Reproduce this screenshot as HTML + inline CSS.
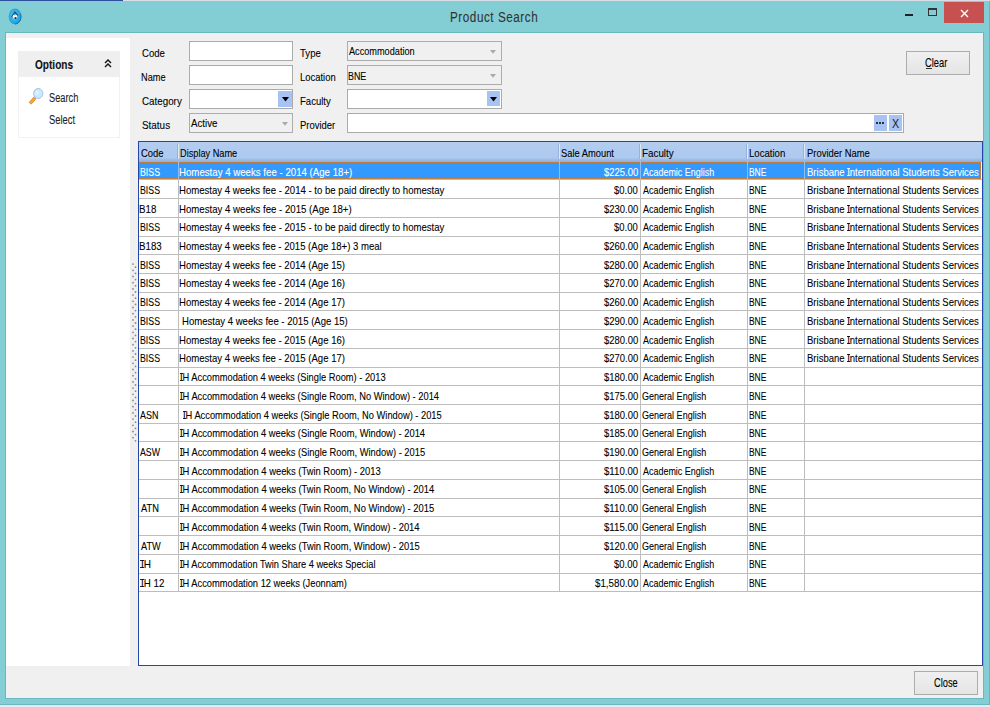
<!DOCTYPE html><html><head><meta charset="utf-8"><style>
*{box-sizing:border-box}
html,body{margin:0;padding:0}
body{width:990px;height:707px;overflow:hidden;position:relative;background:#83CDD5;font-family:"Liberation Sans",sans-serif;color:#000}
div{position:absolute}
.t{white-space:pre;line-height:20px;transform-origin:0 0;-webkit-text-stroke:0.1px currentColor}
.box{background:#fff;border:1px solid #ABABAB}
.cb{background:#F0F0F0;border:1px solid #ADADAD}
.hl{height:1px;background:#BDBDBD}
.vl{width:1px;background:#BDBDBD}
.db{background:#A6C3F4}
</style></head><body>

<div style="left:0;top:0;width:990px;height:1px;background:#D9DEE6"></div>
<div style="left:0;top:0;width:123px;height:1px;background:#2B4F9A"></div>
<div style="left:989px;top:1px;width:1px;height:706px;background:#6AB7BF"></div>
<div style="left:0;top:705px;width:990px;height:2px;background:#E6E8EC"></div>
<div style="left:0;top:704px;width:990px;height:1px;background:#6AB7BF"></div>
<div style="left:5px;top:32px;width:979px;height:667px;border:1px solid #6AB7BF"></div>
<div style="left:6px;top:33px;width:977px;height:665px;background:#F0F0F0"></div>
<svg style="position:absolute;left:8px;top:8px" width="15" height="18" viewBox="0 0 15 18">
<defs><radialGradient id="ig" cx="0.45" cy="0.45" r="0.6"><stop offset="0" stop-color="#5CD0FA"/><stop offset="0.7" stop-color="#22A8EA"/><stop offset="1" stop-color="#1590D0"/></radialGradient></defs>
<ellipse cx="7.0" cy="8.4" rx="6.3" ry="7.9" fill="url(#ig)"/>
<path d="M12.6 5.5 Q14 8.5 12.3 12.5 Q10.5 16 7 16.3" stroke="#1C5A7A" stroke-width="0.9" fill="none" opacity="0.7"/>
<path d="M3.0 8.8 L6.8 3.0 L10.8 7.4 L9.2 7.6 L6.9 5.4 L4.6 9.4 Z" fill="#4A4A4A"/>
<ellipse cx="6.9" cy="8.6" rx="2.3" ry="2.0" fill="#F4F4F4"/>
<circle cx="7.5" cy="10.0" r="1.0" fill="#222"/>
<circle cx="6.8" cy="6.6" r="0.8" fill="#3AB6F0"/>
</svg>
<div class="t" style="left:450.06px;top:7.00px;font-size:15.5px;transform:scaleX(0.7562);color:#333;letter-spacing:0.7px;">Product Search</div>
<div style="left:905.2px;top:14.3px;width:7.8px;height:2.2px;background:#222"></div>
<div style="left:928px;top:8px;width:9px;height:8.4px;border:1px solid #333;border-top-width:2px"></div>
<div style="left:944px;top:2px;width:40px;height:20.7px;background:#C75050"></div>
<svg style="position:absolute;left:960px;top:8.5px" width="9" height="9" viewBox="0 0 9 9"><path d="M1 1 L8 8 M8 1 L1 8" stroke="#fff" stroke-width="1.4"/></svg>
<div style="left:6px;top:38px;width:124px;height:627.6px;background:#fff"></div>
<div style="left:18px;top:51px;width:102px;height:25.7px;background:#EFEFEF"></div>
<div style="left:18px;top:76.7px;width:101.5px;height:61.6px;border:1px solid #F2F2F2;border-top:0"></div>
<div class="t" style="left:35.10px;top:55.00px;font-size:13px;transform:scaleX(0.7755);color:#111;font-weight:bold;">Options</div>
<svg style="position:absolute;left:103.5px;top:59px" width="8" height="9" viewBox="0 0 8 9"><path d="M1 4 L4 1 L7 4 M1 8 L4 5 L7 8" stroke="#111" stroke-width="1.4" fill="none"/></svg>
<svg style="position:absolute;left:28px;top:87px" width="16" height="19" viewBox="0 0 16 19">
<line x1="2.0" y1="16.5" x2="7" y2="10.8" stroke="#D98A20" stroke-width="3.4" stroke-linecap="butt"/>
<line x1="2.0" y1="16.5" x2="7" y2="10.8" stroke="#F5A83A" stroke-width="2.0" stroke-linecap="butt"/>
<ellipse cx="10.2" cy="6.5" rx="4.6" ry="5" fill="#C6EDFA" stroke="#B2B8EA" stroke-width="1"/>
<circle cx="9.2" cy="5.8" r="1.8" fill="#DDF4FC"/>
</svg>
<div class="t" style="left:48.58px;top:88.00px;font-size:12px;transform:scaleX(0.7707);color:#222;">Search</div>
<div class="t" style="left:48.58px;top:110.00px;font-size:12px;transform:scaleX(0.7814);color:#222;">Select</div>
<svg style="position:absolute;left:128px;top:258px" width="12" height="190" viewBox="0 0 12 190"><g fill="#8A8A8A"><circle cx="5.00" cy="6.10" r="0.9"/><circle cx="7.50" cy="9.20" r="0.9"/><circle cx="5.00" cy="12.30" r="0.9"/><circle cx="7.50" cy="15.40" r="0.9"/><circle cx="5.00" cy="18.50" r="0.9"/><circle cx="7.50" cy="21.60" r="0.9"/><circle cx="5.00" cy="24.70" r="0.9"/><circle cx="7.50" cy="27.80" r="0.9"/><circle cx="5.00" cy="30.90" r="0.9"/><circle cx="7.50" cy="34.00" r="0.9"/><circle cx="5.00" cy="37.10" r="0.9"/><circle cx="7.50" cy="40.20" r="0.9"/><circle cx="5.00" cy="43.30" r="0.9"/><circle cx="7.50" cy="46.40" r="0.9"/><circle cx="5.00" cy="49.50" r="0.9"/><circle cx="7.50" cy="52.60" r="0.9"/><circle cx="5.00" cy="55.70" r="0.9"/><circle cx="7.50" cy="58.80" r="0.9"/><circle cx="5.00" cy="61.90" r="0.9"/><circle cx="7.50" cy="65.00" r="0.9"/><circle cx="5.00" cy="68.10" r="0.9"/><circle cx="7.50" cy="71.20" r="0.9"/><circle cx="5.00" cy="74.30" r="0.9"/><circle cx="7.50" cy="77.40" r="0.9"/><circle cx="5.00" cy="80.50" r="0.9"/><circle cx="7.50" cy="83.60" r="0.9"/><circle cx="5.00" cy="86.70" r="0.9"/><circle cx="7.50" cy="89.80" r="0.9"/><circle cx="5.00" cy="92.90" r="0.9"/><circle cx="7.50" cy="96.00" r="0.9"/><circle cx="5.00" cy="99.10" r="0.9"/><circle cx="7.50" cy="102.20" r="0.9"/><circle cx="5.00" cy="105.30" r="0.9"/><circle cx="7.50" cy="108.40" r="0.9"/><circle cx="5.00" cy="111.50" r="0.9"/><circle cx="7.50" cy="114.60" r="0.9"/><circle cx="5.00" cy="117.70" r="0.9"/><circle cx="7.50" cy="120.80" r="0.9"/><circle cx="5.00" cy="123.90" r="0.9"/><circle cx="7.50" cy="127.00" r="0.9"/><circle cx="5.00" cy="130.10" r="0.9"/><circle cx="7.50" cy="133.20" r="0.9"/><circle cx="5.00" cy="136.30" r="0.9"/><circle cx="7.50" cy="139.40" r="0.9"/><circle cx="5.00" cy="142.50" r="0.9"/><circle cx="7.50" cy="145.60" r="0.9"/><circle cx="5.00" cy="148.70" r="0.9"/><circle cx="7.50" cy="151.80" r="0.9"/><circle cx="5.00" cy="154.90" r="0.9"/><circle cx="7.50" cy="158.00" r="0.9"/><circle cx="5.00" cy="161.10" r="0.9"/><circle cx="7.50" cy="164.20" r="0.9"/><circle cx="5.00" cy="167.30" r="0.9"/><circle cx="7.50" cy="170.40" r="0.9"/><circle cx="5.00" cy="173.50" r="0.9"/><circle cx="7.50" cy="176.60" r="0.9"/><circle cx="5.00" cy="179.70" r="0.9"/><circle cx="7.50" cy="182.80" r="0.9"/></g></svg>
<div class="t" style="left:141.52px;top:43.00px;font-size:11.8px;transform:scaleX(0.8115);color:#000;">Code</div>
<div class="t" style="left:141.26px;top:67.00px;font-size:11.8px;transform:scaleX(0.7792);color:#000;">Name</div>
<div class="t" style="left:141.51px;top:91.00px;font-size:11.8px;transform:scaleX(0.8311);color:#000;">Category</div>
<div class="t" style="left:141.55px;top:115.00px;font-size:11.8px;transform:scaleX(0.8398);color:#000;">Status</div>
<div class="t" style="left:300.41px;top:43.00px;font-size:11.8px;transform:scaleX(0.8132);color:#000;">Type</div>
<div class="t" style="left:299.85px;top:67.00px;font-size:11.8px;transform:scaleX(0.7991);color:#000;">Location</div>
<div class="t" style="left:299.84px;top:91.00px;font-size:11.8px;transform:scaleX(0.8090);color:#000;">Faculty</div>
<div class="t" style="left:299.84px;top:115.00px;font-size:11.8px;transform:scaleX(0.8013);color:#000;">Provider</div>
<div class="box" style="left:189px;top:41px;width:104.3px;height:20px"></div>
<div class="box" style="left:189px;top:65px;width:104.3px;height:20px"></div>
<div class="box" style="left:189px;top:89px;width:104.3px;height:20px"></div>
<div class="db" style="left:278.4px;top:90.9px;width:13.2px;height:15.8px"></div>
<svg style="position:absolute;left:281.8px;top:97.2px" width="8" height="5" viewBox="0 0 8 5"><path d="M0 0 L7 0 L3.5 4.5 Z" fill="#000"/></svg>
<div class="cb" style="left:189px;top:113px;width:104.3px;height:20px"></div>
<div class="t" style="left:190.60px;top:113.00px;font-size:11.8px;transform:scaleX(0.8253);color:#000;">Active</div>
<svg style="position:absolute;left:282.3px;top:121.6px" width="7" height="4" viewBox="0 0 7 4"><path d="M0 0 L6 0 L3 3.8 Z" fill="#A8A8A8"/></svg>
<div class="cb" style="left:347.3px;top:41px;width:154.5px;height:20px"></div>
<div class="t" style="left:348.80px;top:41.00px;font-size:11.8px;transform:scaleX(0.7762);color:#000;">Accommodation</div>
<svg style="position:absolute;left:490px;top:49.6px" width="7" height="4" viewBox="0 0 7 4"><path d="M0 0 L6 0 L3 3.8 Z" fill="#A8A8A8"/></svg>
<div class="cb" style="left:347.3px;top:65px;width:154.5px;height:20px"></div>
<div class="t" style="left:348.09px;top:66.00px;font-size:11.8px;transform:scaleX(0.7533);color:#000;">BNE</div>
<svg style="position:absolute;left:490px;top:73.6px" width="7" height="4" viewBox="0 0 7 4"><path d="M0 0 L6 0 L3 3.8 Z" fill="#A8A8A8"/></svg>
<div class="box" style="left:347.3px;top:89px;width:154.5px;height:20px"></div>
<div class="db" style="left:486.6px;top:90.6px;width:13.3px;height:15.8px"></div>
<svg style="position:absolute;left:489.9px;top:97.2px" width="8" height="5" viewBox="0 0 8 5"><path d="M0 0 L7 0 L3.5 4.5 Z" fill="#000"/></svg>
<div class="box" style="left:347.3px;top:113px;width:556.5px;height:20px"></div>
<div class="db" style="left:874px;top:115px;width:13px;height:15.8px"></div>
<div class="db" style="left:888.9px;top:115px;width:13.1px;height:15.8px"></div>
<div style="left:876.3px;top:121.5px;width:2px;height:2px;background:#000;border-radius:1px"></div>
<div style="left:879.3px;top:121.5px;width:2px;height:2px;background:#000;border-radius:1px"></div>
<div style="left:882.3px;top:121.5px;width:2px;height:2px;background:#000;border-radius:1px"></div>
<div class="t" style="left:891.56px;top:114.00px;font-size:12px;transform:scaleX(0.8933);color:#222;-webkit-text-stroke-width:0px;">X</div>
<div style="left:905.6px;top:51px;width:64.2px;height:23.6px;border:1px solid #ACACAC;background:linear-gradient(#F0F0F0,#E5E5E5)"></div>
<div class="t" style="left:924.83px;top:53.00px;font-size:12.6px;transform:scaleX(0.7442);color:#000;">Clear</div>
<div style="left:925.9px;top:67.5px;width:6px;height:1px;background:#333"></div>
<div style="left:914.2px;top:671.2px;width:64px;height:23.8px;border:1px solid #ACACAC;background:linear-gradient(#F0F0F0,#E5E5E5)"></div>
<div class="t" style="left:933.64px;top:673.00px;font-size:12.6px;transform:scaleX(0.7348);color:#000;">Close</div>
<div style="left:138px;top:141px;width:845px;height:525.4px;background:#fff;border:1px solid #2346A8"></div>
<div style="left:139px;top:142px;width:843px;height:19.68px;background:linear-gradient(#B3CDF0 0,#ADC9EE 78%,#8FAEE0 100%)"></div>
<div style="left:176.8px;top:144px;width:1px;height:15px;background:#98B2DE"></div>
<div style="left:177.8px;top:144px;width:1px;height:15px;background:#DCE7F8"></div>
<div style="left:558.0px;top:144px;width:1px;height:15px;background:#98B2DE"></div>
<div style="left:559.0px;top:144px;width:1px;height:15px;background:#DCE7F8"></div>
<div style="left:639.1px;top:144px;width:1px;height:15px;background:#98B2DE"></div>
<div style="left:640.1px;top:144px;width:1px;height:15px;background:#DCE7F8"></div>
<div style="left:746.3px;top:144px;width:1px;height:15px;background:#98B2DE"></div>
<div style="left:747.3px;top:144px;width:1px;height:15px;background:#DCE7F8"></div>
<div style="left:803.2px;top:144px;width:1px;height:15px;background:#98B2DE"></div>
<div style="left:804.2px;top:144px;width:1px;height:15px;background:#DCE7F8"></div>
<div class="t" style="left:140.53px;top:143.00px;font-size:11.8px;transform:scaleX(0.8004);color:#000;">Code</div>
<div class="t" style="left:179.66px;top:143.00px;font-size:11.8px;transform:scaleX(0.7794);color:#000;">Display Name</div>
<div class="t" style="left:561.38px;top:143.00px;font-size:11.8px;transform:scaleX(0.7917);color:#000;">Sale Amount</div>
<div class="t" style="left:642.41px;top:143.00px;font-size:11.8px;transform:scaleX(0.8333);color:#000;">Faculty</div>
<div class="t" style="left:749.23px;top:143.00px;font-size:11.8px;transform:scaleX(0.8131);color:#000;">Location</div>
<div class="t" style="left:806.55px;top:143.00px;font-size:11.8px;transform:scaleX(0.7989);color:#000;">Provider Name</div>
<div style="left:139px;top:161.68px;width:842px;height:17.72px;background:#3399FF"></div>
<div style="left:139px;top:161.68px;width:842px;height:17.72px;border:1px dotted #C08040"></div>
<div class="hl" style="left:139px;top:179.40px;width:843px"></div>
<div class="hl" style="left:139px;top:198.12px;width:843px"></div>
<div class="hl" style="left:139px;top:216.84px;width:843px"></div>
<div class="hl" style="left:139px;top:235.56px;width:843px"></div>
<div class="hl" style="left:139px;top:254.28px;width:843px"></div>
<div class="hl" style="left:139px;top:273.00px;width:843px"></div>
<div class="hl" style="left:139px;top:291.72px;width:843px"></div>
<div class="hl" style="left:139px;top:310.44px;width:843px"></div>
<div class="hl" style="left:139px;top:329.16px;width:843px"></div>
<div class="hl" style="left:139px;top:347.88px;width:843px"></div>
<div class="hl" style="left:139px;top:366.60px;width:843px"></div>
<div class="hl" style="left:139px;top:385.32px;width:843px"></div>
<div class="hl" style="left:139px;top:404.04px;width:843px"></div>
<div class="hl" style="left:139px;top:422.76px;width:843px"></div>
<div class="hl" style="left:139px;top:441.48px;width:843px"></div>
<div class="hl" style="left:139px;top:460.20px;width:843px"></div>
<div class="hl" style="left:139px;top:478.92px;width:843px"></div>
<div class="hl" style="left:139px;top:497.64px;width:843px"></div>
<div class="hl" style="left:139px;top:516.36px;width:843px"></div>
<div class="hl" style="left:139px;top:535.08px;width:843px"></div>
<div class="hl" style="left:139px;top:553.80px;width:843px"></div>
<div class="hl" style="left:139px;top:572.52px;width:843px"></div>
<div class="hl" style="left:139px;top:591.24px;width:843px"></div>
<div class="vl" style="left:177.7px;top:160.68px;height:430.56px"></div>
<div style="left:177.7px;top:162.68px;width:1px;height:15.72px;background:#8CC0F4"></div>
<div class="vl" style="left:558.9px;top:160.68px;height:430.56px"></div>
<div style="left:558.9px;top:162.68px;width:1px;height:15.72px;background:#8CC0F4"></div>
<div class="vl" style="left:640.0px;top:160.68px;height:430.56px"></div>
<div style="left:640.0px;top:162.68px;width:1px;height:15.72px;background:#8CC0F4"></div>
<div class="vl" style="left:747.2px;top:160.68px;height:430.56px"></div>
<div style="left:747.2px;top:162.68px;width:1px;height:15.72px;background:#8CC0F4"></div>
<div class="vl" style="left:804.1px;top:160.68px;height:430.56px"></div>
<div style="left:804.1px;top:162.68px;width:1px;height:15.72px;background:#8CC0F4"></div>
<div class="t" style="left:139.60px;top:162.00px;font-size:11.8px;transform:scaleX(0.7432);color:#fff;">BISS</div>
<div class="t" style="left:179.13px;top:162.00px;font-size:11.8px;transform:scaleX(0.8195);color:#fff;">Homestay 4 weeks fee - 2014 (Age 18+)</div>

<div class="t" style="left:603.71px;top:162.00px;font-size:11.8px;transform:scaleX(0.8011);color:#fff;">$225.00</div>
<div class="t" style="left:642.70px;top:162.00px;font-size:11.8px;transform:scaleX(0.7588);color:#fff;">Academic English</div>
<div class="t" style="left:749.03px;top:162.00px;font-size:11.8px;transform:scaleX(0.7139);color:#fff;">BNE</div>
<div class="t" style="left:806.64px;top:162.00px;font-size:11.8px;transform:scaleX(0.8063);color:#fff;">Brisbane International Students Services</div>
<div style="left:846.56px;top:168px;width:3.2px;height:1px;background:#fff;opacity:.85"></div><div style="left:846.56px;top:175px;width:3.2px;height:1px;background:#fff;opacity:.85"></div>
<div class="t" style="left:139.60px;top:180.00px;font-size:11.8px;transform:scaleX(0.7432);color:#000;">BISS</div>
<div class="t" style="left:179.13px;top:180.00px;font-size:11.8px;transform:scaleX(0.8127);color:#000;">Homestay 4 weeks fee - 2014 - to be paid directly to homestay</div>

<div class="t" style="left:614.21px;top:180.00px;font-size:11.8px;transform:scaleX(0.8009);color:#000;">$0.00</div>
<div class="t" style="left:642.70px;top:180.00px;font-size:11.8px;transform:scaleX(0.7588);color:#000;">Academic English</div>
<div class="t" style="left:749.03px;top:180.00px;font-size:11.8px;transform:scaleX(0.7139);color:#000;">BNE</div>
<div class="t" style="left:806.64px;top:180.00px;font-size:11.8px;transform:scaleX(0.8063);color:#000;">Brisbane International Students Services</div>
<div style="left:846.56px;top:186px;width:3.2px;height:1px;background:#000;opacity:.85"></div><div style="left:846.56px;top:193px;width:3.2px;height:1px;background:#000;opacity:.85"></div>
<div class="t" style="left:139.32px;top:199.00px;font-size:11.8px;transform:scaleX(0.8232);color:#000;">B18</div>
<div class="t" style="left:179.13px;top:199.00px;font-size:11.8px;transform:scaleX(0.8166);color:#000;">Homestay 4 weeks fee - 2015 (Age 18+)</div>

<div class="t" style="left:603.71px;top:199.00px;font-size:11.8px;transform:scaleX(0.8011);color:#000;">$230.00</div>
<div class="t" style="left:642.70px;top:199.00px;font-size:11.8px;transform:scaleX(0.7588);color:#000;">Academic English</div>
<div class="t" style="left:749.03px;top:199.00px;font-size:11.8px;transform:scaleX(0.7139);color:#000;">BNE</div>
<div class="t" style="left:806.64px;top:199.00px;font-size:11.8px;transform:scaleX(0.8063);color:#000;">Brisbane International Students Services</div>
<div style="left:846.56px;top:205px;width:3.2px;height:1px;background:#000;opacity:.85"></div><div style="left:846.56px;top:212px;width:3.2px;height:1px;background:#000;opacity:.85"></div>
<div class="t" style="left:139.60px;top:217.00px;font-size:11.8px;transform:scaleX(0.7432);color:#000;">BISS</div>
<div class="t" style="left:179.13px;top:217.00px;font-size:11.8px;transform:scaleX(0.8127);color:#000;">Homestay 4 weeks fee - 2015 - to be paid directly to homestay</div>

<div class="t" style="left:614.21px;top:217.00px;font-size:11.8px;transform:scaleX(0.8009);color:#000;">$0.00</div>
<div class="t" style="left:642.70px;top:217.00px;font-size:11.8px;transform:scaleX(0.7588);color:#000;">Academic English</div>
<div class="t" style="left:749.03px;top:217.00px;font-size:11.8px;transform:scaleX(0.7139);color:#000;">BNE</div>
<div class="t" style="left:806.64px;top:217.00px;font-size:11.8px;transform:scaleX(0.8063);color:#000;">Brisbane International Students Services</div>
<div style="left:846.56px;top:223px;width:3.2px;height:1px;background:#000;opacity:.85"></div><div style="left:846.56px;top:230px;width:3.2px;height:1px;background:#000;opacity:.85"></div>
<div class="t" style="left:139.22px;top:236.00px;font-size:11.8px;transform:scaleX(0.8235);color:#000;">B183</div>
<div class="t" style="left:179.14px;top:236.00px;font-size:11.8px;transform:scaleX(0.8103);color:#000;">Homestay 4 weeks fee - 2015 (Age 18+) 3 meal</div>

<div class="t" style="left:603.71px;top:236.00px;font-size:11.8px;transform:scaleX(0.8011);color:#000;">$260.00</div>
<div class="t" style="left:642.70px;top:236.00px;font-size:11.8px;transform:scaleX(0.7588);color:#000;">Academic English</div>
<div class="t" style="left:749.03px;top:236.00px;font-size:11.8px;transform:scaleX(0.7139);color:#000;">BNE</div>
<div class="t" style="left:806.64px;top:236.00px;font-size:11.8px;transform:scaleX(0.8063);color:#000;">Brisbane International Students Services</div>
<div style="left:846.56px;top:242px;width:3.2px;height:1px;background:#000;opacity:.85"></div><div style="left:846.56px;top:249px;width:3.2px;height:1px;background:#000;opacity:.85"></div>
<div class="t" style="left:139.60px;top:255.00px;font-size:11.8px;transform:scaleX(0.7432);color:#000;">BISS</div>
<div class="t" style="left:179.13px;top:255.00px;font-size:11.8px;transform:scaleX(0.8114);color:#000;">Homestay 4 weeks fee - 2014 (Age 15)</div>

<div class="t" style="left:603.71px;top:255.00px;font-size:11.8px;transform:scaleX(0.8011);color:#000;">$280.00</div>
<div class="t" style="left:642.70px;top:255.00px;font-size:11.8px;transform:scaleX(0.7588);color:#000;">Academic English</div>
<div class="t" style="left:749.03px;top:255.00px;font-size:11.8px;transform:scaleX(0.7139);color:#000;">BNE</div>
<div class="t" style="left:806.64px;top:255.00px;font-size:11.8px;transform:scaleX(0.8063);color:#000;">Brisbane International Students Services</div>
<div style="left:846.56px;top:261px;width:3.2px;height:1px;background:#000;opacity:.85"></div><div style="left:846.56px;top:268px;width:3.2px;height:1px;background:#000;opacity:.85"></div>
<div class="t" style="left:139.60px;top:273.00px;font-size:11.8px;transform:scaleX(0.7432);color:#000;">BISS</div>
<div class="t" style="left:179.13px;top:273.00px;font-size:11.8px;transform:scaleX(0.8114);color:#000;">Homestay 4 weeks fee - 2014 (Age 16)</div>

<div class="t" style="left:603.71px;top:273.00px;font-size:11.8px;transform:scaleX(0.8011);color:#000;">$270.00</div>
<div class="t" style="left:642.70px;top:273.00px;font-size:11.8px;transform:scaleX(0.7588);color:#000;">Academic English</div>
<div class="t" style="left:749.03px;top:273.00px;font-size:11.8px;transform:scaleX(0.7139);color:#000;">BNE</div>
<div class="t" style="left:806.64px;top:273.00px;font-size:11.8px;transform:scaleX(0.8063);color:#000;">Brisbane International Students Services</div>
<div style="left:846.56px;top:279px;width:3.2px;height:1px;background:#000;opacity:.85"></div><div style="left:846.56px;top:286px;width:3.2px;height:1px;background:#000;opacity:.85"></div>
<div class="t" style="left:139.60px;top:292.00px;font-size:11.8px;transform:scaleX(0.7432);color:#000;">BISS</div>
<div class="t" style="left:179.13px;top:292.00px;font-size:11.8px;transform:scaleX(0.8114);color:#000;">Homestay 4 weeks fee - 2014 (Age 17)</div>

<div class="t" style="left:603.71px;top:292.00px;font-size:11.8px;transform:scaleX(0.8011);color:#000;">$260.00</div>
<div class="t" style="left:642.70px;top:292.00px;font-size:11.8px;transform:scaleX(0.7588);color:#000;">Academic English</div>
<div class="t" style="left:749.03px;top:292.00px;font-size:11.8px;transform:scaleX(0.7139);color:#000;">BNE</div>
<div class="t" style="left:806.64px;top:292.00px;font-size:11.8px;transform:scaleX(0.8063);color:#000;">Brisbane International Students Services</div>
<div style="left:846.56px;top:298px;width:3.2px;height:1px;background:#000;opacity:.85"></div><div style="left:846.56px;top:305px;width:3.2px;height:1px;background:#000;opacity:.85"></div>
<div class="t" style="left:139.60px;top:311.00px;font-size:11.8px;transform:scaleX(0.7432);color:#000;">BISS</div>
<div class="t" style="left:181.83px;top:311.00px;font-size:11.8px;transform:scaleX(0.8104);color:#000;">Homestay 4 weeks fee - 2015 (Age 15)</div>

<div class="t" style="left:603.71px;top:311.00px;font-size:11.8px;transform:scaleX(0.8011);color:#000;">$290.00</div>
<div class="t" style="left:642.70px;top:311.00px;font-size:11.8px;transform:scaleX(0.7588);color:#000;">Academic English</div>
<div class="t" style="left:749.03px;top:311.00px;font-size:11.8px;transform:scaleX(0.7139);color:#000;">BNE</div>
<div class="t" style="left:806.64px;top:311.00px;font-size:11.8px;transform:scaleX(0.8063);color:#000;">Brisbane International Students Services</div>
<div style="left:846.56px;top:317px;width:3.2px;height:1px;background:#000;opacity:.85"></div><div style="left:846.56px;top:324px;width:3.2px;height:1px;background:#000;opacity:.85"></div>
<div class="t" style="left:139.60px;top:330.00px;font-size:11.8px;transform:scaleX(0.7432);color:#000;">BISS</div>
<div class="t" style="left:179.13px;top:330.00px;font-size:11.8px;transform:scaleX(0.8114);color:#000;">Homestay 4 weeks fee - 2015 (Age 16)</div>

<div class="t" style="left:603.71px;top:330.00px;font-size:11.8px;transform:scaleX(0.8011);color:#000;">$280.00</div>
<div class="t" style="left:642.70px;top:330.00px;font-size:11.8px;transform:scaleX(0.7588);color:#000;">Academic English</div>
<div class="t" style="left:749.03px;top:330.00px;font-size:11.8px;transform:scaleX(0.7139);color:#000;">BNE</div>
<div class="t" style="left:806.64px;top:330.00px;font-size:11.8px;transform:scaleX(0.8063);color:#000;">Brisbane International Students Services</div>
<div style="left:846.56px;top:336px;width:3.2px;height:1px;background:#000;opacity:.85"></div><div style="left:846.56px;top:343px;width:3.2px;height:1px;background:#000;opacity:.85"></div>
<div class="t" style="left:139.60px;top:348.00px;font-size:11.8px;transform:scaleX(0.7432);color:#000;">BISS</div>
<div class="t" style="left:179.13px;top:348.00px;font-size:11.8px;transform:scaleX(0.8114);color:#000;">Homestay 4 weeks fee - 2015 (Age 17)</div>

<div class="t" style="left:603.71px;top:348.00px;font-size:11.8px;transform:scaleX(0.8011);color:#000;">$270.00</div>
<div class="t" style="left:642.70px;top:348.00px;font-size:11.8px;transform:scaleX(0.7588);color:#000;">Academic English</div>
<div class="t" style="left:749.03px;top:348.00px;font-size:11.8px;transform:scaleX(0.7139);color:#000;">BNE</div>
<div class="t" style="left:806.64px;top:348.00px;font-size:11.8px;transform:scaleX(0.8063);color:#000;">Brisbane International Students Services</div>
<div style="left:846.56px;top:354px;width:3.2px;height:1px;background:#000;opacity:.85"></div><div style="left:846.56px;top:361px;width:3.2px;height:1px;background:#000;opacity:.85"></div>
<div class="t" style="left:180.26px;top:367.00px;font-size:11.8px;transform:scaleX(0.7878);color:#000;">IH Accommodation 4 weeks (Single Room) - 2013</div>
<div style="left:179.96px;top:373px;width:3.2px;height:1px;background:#000;opacity:.85"></div><div style="left:179.96px;top:380px;width:3.2px;height:1px;background:#000;opacity:.85"></div>
<div class="t" style="left:603.71px;top:367.00px;font-size:11.8px;transform:scaleX(0.8011);color:#000;">$180.00</div>
<div class="t" style="left:642.70px;top:367.00px;font-size:11.8px;transform:scaleX(0.7588);color:#000;">Academic English</div>
<div class="t" style="left:749.03px;top:367.00px;font-size:11.8px;transform:scaleX(0.7139);color:#000;">BNE</div>
<div class="t" style="left:180.26px;top:386.00px;font-size:11.8px;transform:scaleX(0.7901);color:#000;">IH Accommodation 4 weeks (Single Room, No Window) - 2014</div>
<div style="left:179.96px;top:392px;width:3.2px;height:1px;background:#000;opacity:.85"></div><div style="left:179.96px;top:399px;width:3.2px;height:1px;background:#000;opacity:.85"></div>
<div class="t" style="left:603.71px;top:386.00px;font-size:11.8px;transform:scaleX(0.8011);color:#000;">$175.00</div>
<div class="t" style="left:642.25px;top:386.00px;font-size:11.8px;transform:scaleX(0.7649);color:#000;">General English</div>
<div class="t" style="left:749.03px;top:386.00px;font-size:11.8px;transform:scaleX(0.7139);color:#000;">BNE</div>
<div class="t" style="left:140.20px;top:405.00px;font-size:11.8px;transform:scaleX(0.7585);color:#000;">ASN</div>
<div class="t" style="left:182.96px;top:405.00px;font-size:11.8px;transform:scaleX(0.7892);color:#000;">IH Accommodation 4 weeks (Single Room, No Window) - 2015</div>
<div style="left:182.66px;top:411px;width:3.2px;height:1px;background:#000;opacity:.85"></div><div style="left:182.66px;top:418px;width:3.2px;height:1px;background:#000;opacity:.85"></div>
<div class="t" style="left:603.71px;top:405.00px;font-size:11.8px;transform:scaleX(0.8011);color:#000;">$180.00</div>
<div class="t" style="left:642.25px;top:405.00px;font-size:11.8px;transform:scaleX(0.7649);color:#000;">General English</div>
<div class="t" style="left:749.03px;top:405.00px;font-size:11.8px;transform:scaleX(0.7139);color:#000;">BNE</div>
<div class="t" style="left:180.26px;top:423.00px;font-size:11.8px;transform:scaleX(0.7918);color:#000;">IH Accommodation 4 weeks (Single Room, Window) - 2014</div>
<div style="left:179.96px;top:429px;width:3.2px;height:1px;background:#000;opacity:.85"></div><div style="left:179.96px;top:436px;width:3.2px;height:1px;background:#000;opacity:.85"></div>
<div class="t" style="left:603.71px;top:423.00px;font-size:11.8px;transform:scaleX(0.8011);color:#000;">$185.00</div>
<div class="t" style="left:642.25px;top:423.00px;font-size:11.8px;transform:scaleX(0.7649);color:#000;">General English</div>
<div class="t" style="left:749.03px;top:423.00px;font-size:11.8px;transform:scaleX(0.7139);color:#000;">BNE</div>
<div class="t" style="left:140.20px;top:442.00px;font-size:11.8px;transform:scaleX(0.7442);color:#000;">ASW</div>
<div class="t" style="left:180.26px;top:442.00px;font-size:11.8px;transform:scaleX(0.7922);color:#000;">IH Accommodation 4 weeks (Single Room, Window) - 2015</div>
<div style="left:179.96px;top:448px;width:3.2px;height:1px;background:#000;opacity:.85"></div><div style="left:179.96px;top:455px;width:3.2px;height:1px;background:#000;opacity:.85"></div>
<div class="t" style="left:603.71px;top:442.00px;font-size:11.8px;transform:scaleX(0.8011);color:#000;">$190.00</div>
<div class="t" style="left:642.25px;top:442.00px;font-size:11.8px;transform:scaleX(0.7649);color:#000;">General English</div>
<div class="t" style="left:749.03px;top:442.00px;font-size:11.8px;transform:scaleX(0.7139);color:#000;">BNE</div>
<div class="t" style="left:180.26px;top:461.00px;font-size:11.8px;transform:scaleX(0.7951);color:#000;">IH Accommodation 4 weeks (Twin Room) - 2013</div>
<div style="left:179.96px;top:467px;width:3.2px;height:1px;background:#000;opacity:.85"></div><div style="left:179.96px;top:474px;width:3.2px;height:1px;background:#000;opacity:.85"></div>
<div class="t" style="left:603.70px;top:461.00px;font-size:11.8px;transform:scaleX(0.8177);color:#000;">$110.00</div>
<div class="t" style="left:642.70px;top:461.00px;font-size:11.8px;transform:scaleX(0.7588);color:#000;">Academic English</div>
<div class="t" style="left:749.03px;top:461.00px;font-size:11.8px;transform:scaleX(0.7139);color:#000;">BNE</div>
<div class="t" style="left:180.25px;top:479.00px;font-size:11.8px;transform:scaleX(0.7960);color:#000;">IH Accommodation 4 weeks (Twin Room, No Window) - 2014</div>
<div style="left:179.96px;top:485px;width:3.2px;height:1px;background:#000;opacity:.85"></div><div style="left:179.96px;top:492px;width:3.2px;height:1px;background:#000;opacity:.85"></div>
<div class="t" style="left:603.71px;top:479.00px;font-size:11.8px;transform:scaleX(0.8011);color:#000;">$105.00</div>
<div class="t" style="left:642.25px;top:479.00px;font-size:11.8px;transform:scaleX(0.7649);color:#000;">General English</div>
<div class="t" style="left:749.03px;top:479.00px;font-size:11.8px;transform:scaleX(0.7139);color:#000;">BNE</div>
<div class="t" style="left:140.50px;top:498.00px;font-size:11.8px;transform:scaleX(0.7900);color:#000;">ATN</div>
<div class="t" style="left:180.25px;top:498.00px;font-size:11.8px;transform:scaleX(0.7963);color:#000;">IH Accommodation 4 weeks (Twin Room, No Window) - 2015</div>
<div style="left:179.96px;top:504px;width:3.2px;height:1px;background:#000;opacity:.85"></div><div style="left:179.96px;top:511px;width:3.2px;height:1px;background:#000;opacity:.85"></div>
<div class="t" style="left:603.70px;top:498.00px;font-size:11.8px;transform:scaleX(0.8177);color:#000;">$110.00</div>
<div class="t" style="left:642.25px;top:498.00px;font-size:11.8px;transform:scaleX(0.7649);color:#000;">General English</div>
<div class="t" style="left:749.03px;top:498.00px;font-size:11.8px;transform:scaleX(0.7139);color:#000;">BNE</div>
<div class="t" style="left:180.25px;top:517.00px;font-size:11.8px;transform:scaleX(0.7960);color:#000;">IH Accommodation 4 weeks (Twin Room, Window) - 2014</div>
<div style="left:179.96px;top:523px;width:3.2px;height:1px;background:#000;opacity:.85"></div><div style="left:179.96px;top:530px;width:3.2px;height:1px;background:#000;opacity:.85"></div>
<div class="t" style="left:603.70px;top:517.00px;font-size:11.8px;transform:scaleX(0.8177);color:#000;">$115.00</div>
<div class="t" style="left:642.25px;top:517.00px;font-size:11.8px;transform:scaleX(0.7649);color:#000;">General English</div>
<div class="t" style="left:749.03px;top:517.00px;font-size:11.8px;transform:scaleX(0.7139);color:#000;">BNE</div>
<div class="t" style="left:140.50px;top:536.00px;font-size:11.8px;transform:scaleX(0.7783);color:#000;">ATW</div>
<div class="t" style="left:180.25px;top:536.00px;font-size:11.8px;transform:scaleX(0.7964);color:#000;">IH Accommodation 4 weeks (Twin Room, Window) - 2015</div>
<div style="left:179.96px;top:542px;width:3.2px;height:1px;background:#000;opacity:.85"></div><div style="left:179.96px;top:549px;width:3.2px;height:1px;background:#000;opacity:.85"></div>
<div class="t" style="left:603.71px;top:536.00px;font-size:11.8px;transform:scaleX(0.8011);color:#000;">$120.00</div>
<div class="t" style="left:642.25px;top:536.00px;font-size:11.8px;transform:scaleX(0.7649);color:#000;">General English</div>
<div class="t" style="left:749.03px;top:536.00px;font-size:11.8px;transform:scaleX(0.7139);color:#000;">BNE</div>
<div class="t" style="left:140.60px;top:554.00px;font-size:11.8px;transform:scaleX(0.8475);color:#000;">IH</div>
<div style="left:140.39px;top:560px;width:3.2px;height:1px;background:#000;opacity:.85"></div><div style="left:140.39px;top:567px;width:3.2px;height:1px;background:#000;opacity:.85"></div>
<div class="t" style="left:180.27px;top:554.00px;font-size:11.8px;transform:scaleX(0.7831);color:#000;">IH Accommodation Twin Share 4 weeks Special</div>
<div style="left:179.95px;top:560px;width:3.2px;height:1px;background:#000;opacity:.85"></div><div style="left:179.95px;top:567px;width:3.2px;height:1px;background:#000;opacity:.85"></div>
<div class="t" style="left:614.21px;top:554.00px;font-size:11.8px;transform:scaleX(0.8009);color:#000;">$0.00</div>
<div class="t" style="left:642.70px;top:554.00px;font-size:11.8px;transform:scaleX(0.7588);color:#000;">Academic English</div>
<div class="t" style="left:749.03px;top:554.00px;font-size:11.8px;transform:scaleX(0.7139);color:#000;">BNE</div>
<div class="t" style="left:140.62px;top:573.00px;font-size:11.8px;transform:scaleX(0.8277);color:#000;">IH 12</div>
<div style="left:140.38px;top:579px;width:3.2px;height:1px;background:#000;opacity:.85"></div><div style="left:140.38px;top:586px;width:3.2px;height:1px;background:#000;opacity:.85"></div>
<div class="t" style="left:180.26px;top:573.00px;font-size:11.8px;transform:scaleX(0.7883);color:#000;">IH Accommodation 12 weeks (Jeonnam)</div>
<div style="left:179.96px;top:579px;width:3.2px;height:1px;background:#000;opacity:.85"></div><div style="left:179.96px;top:586px;width:3.2px;height:1px;background:#000;opacity:.85"></div>
<div class="t" style="left:594.50px;top:573.00px;font-size:11.8px;transform:scaleX(0.8263);color:#000;">$1,580.00</div>
<div class="t" style="left:642.70px;top:573.00px;font-size:11.8px;transform:scaleX(0.7588);color:#000;">Academic English</div>
<div class="t" style="left:749.03px;top:573.00px;font-size:11.8px;transform:scaleX(0.7139);color:#000;">BNE</div>
</body></html>
